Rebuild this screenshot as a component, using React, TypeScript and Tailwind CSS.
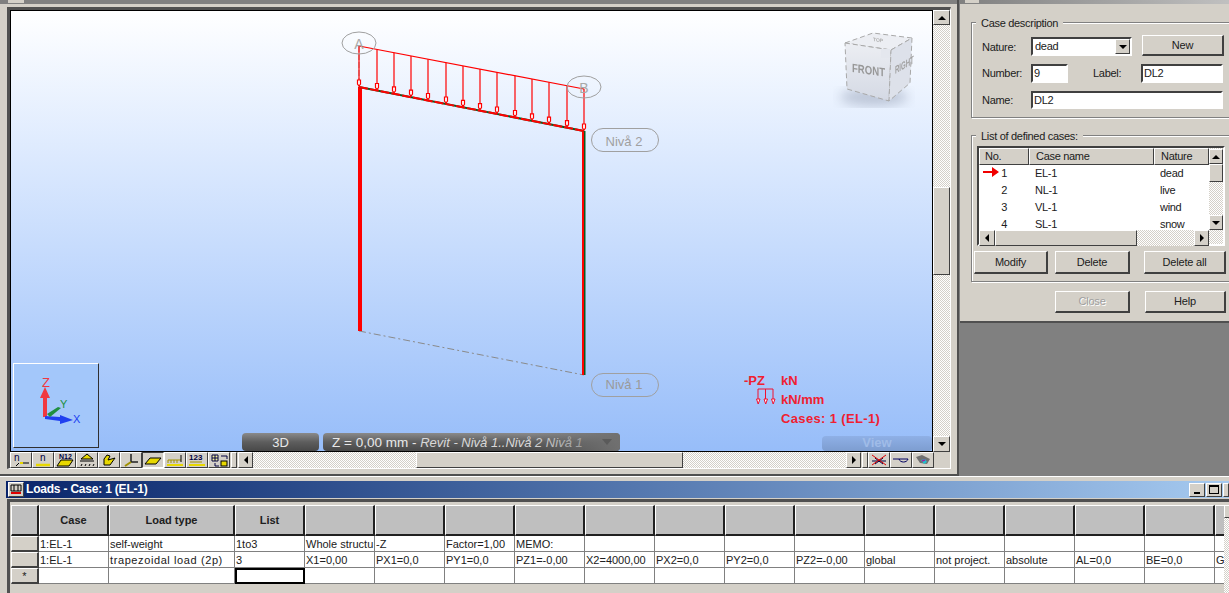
import type { ReactNode } from "react";

const raised = "border border-t-white border-l-white border-r-[#404040] border-b-[#404040] bg-[#d4d0c8]";
const sunken = "border-2 border-t-[#404040] border-l-[#404040] border-r-white border-b-white bg-white";
const dither = "bg-[repeating-conic-gradient(#d4d0c8_0_25%,#ffffff_0_50%)] bg-[length:2px_2px]";
const dialogText = "text-[11px] tracking-[-0.3px] text-[#202020]";

const loadXs = [359, 377, 394, 411, 428, 446, 463, 480, 497, 515, 532, 549, 567, 584];

const columns = [28, 70, 126, 70, 70, 70, 70, 70, 70, 70, 70, 70, 70, 70, 70, 70, 70, 20];
const headers = ["", "Case", "Load type", "List"];

const rows = [
    ["", "1:EL-1", "self-weight", "1to3", "Whole structu", "-Z", "Factor=1,00", "MEMO:"],
    ["", "1:EL-1", "trapezoidal load (2p)", "3", "X1=0,00", "PX1=0,0", "PY1=0,0", "PZ1=-0,00", "X2=4000,00", "PX2=0,0", "PY2=0,0", "PZ2=-0,00", "global", "not project.", "absolute", "AL=0,0", "BE=0,0", "G"],
    ["*"],
];

const cases = [
    ["1", "EL-1", "dead"],
    ["2", "NL-1", "live"],
    ["3", "VL-1", "wind"],
    ["4", "SL-1", "snow"],
];

function Arrow({ dir, size = 4 }: { dir: "up" | "down" | "left" | "right"; size?: number }) {
    const points = {
        up: "0,6 8,6 4,2",
        down: "0,2 8,2 4,6",
        left: "6,0 6,8 2,4",
        right: "2,0 2,8 6,4",
    }[dir];
    return (
        <svg width={size * 2} height={size * 2} viewBox="0 0 8 8">
            <polygon points={points} fill="#000" />
        </svg>
    );
}

function ScrollButton({ dir, className }: { dir: "up" | "down" | "left" | "right"; className: string }) {
    return (
        <div className={`${raised} ${className} flex shrink-0 items-center justify-center`}>
            <Arrow dir={dir} />
        </div>
    );
}

function ToolButton({ pressed, width = "w-[22px]", children }: { pressed?: boolean; width?: string; children?: ReactNode }) {
    return (
        <div className={`${width} h-[16px] shrink-0 flex items-center justify-center border ${pressed ? "border-t-[#404040] border-l-[#404040] border-r-white border-b-white" : "border-t-white border-l-white border-r-[#404040] border-b-[#404040]"} bg-[#d4d0c8]`}>
            {children}
        </div>
    );
}

function ToolIcon({ children }: { children: ReactNode }) {
    return (
        <svg width="20" height="14" viewBox="0 0 20 14" className="font-['Liberation_Sans',sans-serif]">
            {children}
        </svg>
    );
}

function Toolbar() {
    return (
        <div className="h-[16px] flex bg-[#d4d0c8] w-[924px] shrink-0">
            <ToolButton><ToolIcon><text x="3" y="8" fontSize="10" fill="#000040">n</text><path d="M10 10h8" stroke="#000" /><path d="M9 10h3" stroke="#e8d800" strokeWidth="2" /><path d="M5 13l3-3" stroke="#000" /></ToolIcon></ToolButton>
            <ToolButton><ToolIcon><text x="7" y="8" fontSize="10" fill="#000040">n</text><path d="M3 12h14" stroke="#e8d800" strokeWidth="2.5" /></ToolIcon></ToolButton>
            <ToolButton><ToolIcon><text x="4" y="6" fontSize="7" fontWeight="700" fill="#000040">N12</text><polygon points="2,13 6,7 18,7 14,13" fill="#e8d800" stroke="#000" /></ToolIcon></ToolButton>
            <ToolButton><ToolIcon><polygon points="10,1 16,6 4,6" fill="#e8d800" stroke="#000" /><path d="M3 8h14" stroke="#000" /><path d="M5 11l-1 2M9 11l-1 2M13 11l-1 2M17 11l-1 2" stroke="#000" /></ToolIcon></ToolButton>
            <ToolButton><ToolIcon><polygon points="5,6 8,2 11,3 9,7 16,5 11,12 5,12" fill="#e8d800" stroke="#000" /></ToolIcon></ToolButton>
            <ToolButton><ToolIcon><path d="M10 1v8h7" stroke="#202020" strokeWidth="1.5" fill="none" /><path d="M4 13l6-4" stroke="#a09000" strokeWidth="2" /></ToolIcon></ToolButton>
            <ToolButton pressed><ToolIcon><polygon points="2,11 7,5 18,5 13,11" fill="#e8d800" stroke="#000" /></ToolIcon></ToolButton>
            <ToolButton><ToolIcon><path d="M3 7h13M3 7v3M6 7v3M9 7v3M12 7v3" stroke="#a09000" fill="none" /><path d="M16 2v7" stroke="#000" /><path d="M2 12h16" stroke="#e8d800" strokeWidth="2" /></ToolIcon></ToolButton>
            <ToolButton><ToolIcon><text x="2" y="7" fontSize="8" fontWeight="700" fill="#000040">123</text><path d="M3 9h12" stroke="#a09000" /><path d="M2 12h16" stroke="#e8d800" strokeWidth="2" /></ToolIcon></ToolButton>
            <ToolButton><ToolIcon><path d="M3 2h6v6H3zM3 5h6M6 2v6" stroke="#000040" fill="#f4f0a0" /><path d="M12 3h6v3M6 10v3h4" stroke="#000040" fill="none" /><rect x="12" y="8" width="6" height="5" fill="#e8d800" stroke="#000" /></ToolIcon></ToolButton>
            <div className="w-[1px]" />
            <ToolButton width="w-[6px]" />
            <div className="w-[1px]" />
            <ScrollButton dir="left" className="w-[15px] h-[16px]" />
            <div className={`${dither} w-[163px] h-[16px]`} />
            <div className={`${raised} w-[267px] h-[16px] shrink-0`} />
            <div className={`${dither} w-[163px] h-[16px]`} />
            <ScrollButton dir="right" className="w-[15px] h-[16px]" />
            <div className="w-[1px]" />
            <ToolButton width="w-[6px]" />
            <ToolButton><ToolIcon><path d="M3 8h14M6 5l8 6M6 11l8-6" stroke="#000040" /><path d="M3 2l14 10M17 2L3 12" stroke="#e00000" /></ToolIcon></ToolButton>
            <ToolButton><ToolIcon><path d="M2 6h6M8 6c1 4 8 4 9 0H8" stroke="#000060" fill="none" /></ToolIcon></ToolButton>
            <ToolButton><ToolIcon><path d="M3 4l6-2 8 4-3 5-7-1z" fill="#707070" /><path d="M8 7l4-1 2 3-3 2z" fill="#20c0d0" /><path d="M9 8l3-1" stroke="#a020a0" strokeWidth="1.5" /></ToolIcon></ToolButton>
        </div>
    );
}

function Model() {
    return (
        <svg className="absolute inset-0 font-['Liberation_Sans',sans-serif]" width="923" height="441" viewBox="11 11 923 441">
            <defs>
                <filter id="blur"><feGaussianBlur stdDeviation="6" /></filter>
                <filter id="soft"><feGaussianBlur stdDeviation="0.4" /></filter>
                <linearGradient id="face" x1="0" y1="0" x2="0" y2="1">
                    <stop offset="0" stopColor="#eceef3" />
                    <stop offset="1" stopColor="#d4d9e4" />
                </linearGradient>
            </defs>

            {/* frame */}
            <path d="M359 46V87" stroke="#999" strokeDasharray="6 2" />
            <line x1="359" y1="331" x2="584" y2="375" stroke="#8a8a8a" strokeDasharray="7 3 2 3" />
            <rect x="358" y="87" width="4" height="244" fill="#ff0000" />
            <rect x="582" y="131" width="2" height="244" fill="#ff0000" />
            <rect x="584" y="131" width="1.5" height="244" fill="#0a5a20" />
            <line x1="359" y1="87" x2="584" y2="131" stroke="#0a5a20" strokeWidth="2" />
            <line x1="359" y1="87" x2="584" y2="131" stroke="#ff0000" strokeWidth="2" strokeDasharray="9 2" />

            {/* trapezoidal load */}
            <line x1="359" y1="46" x2="584" y2="89" stroke="#ff0000" strokeWidth="1.2" />
            {loadXs.map((x) => {
                const top = 46 + ((x - 359) * 43) / 225;
                const tip = 87 + ((x - 359) * 44) / 225;
                return (
                    <g key={x} stroke="#ff0000" strokeWidth="1.2" fill="#fff">
                        <line x1={x} y1={top} x2={x} y2={tip - 6} />
                        <polygon points={`${x - 1.5},${tip - 7} ${x + 1.5},${tip - 7} ${x + 1.5},${tip - 3} ${x},${tip - 1} ${x - 1.5},${tip - 3}`} />
                    </g>
                );
            })}

            {/* grid bubbles */}
            <ellipse cx="359" cy="43" rx="17" ry="11" fill="none" stroke="#a0a0a0" />
            <text x="359" y="49" textAnchor="middle" fontSize="14" fill="#a8a8a8">A</text>
            <ellipse cx="584" cy="87" rx="17" ry="11" fill="none" stroke="#a0a0a0" />
            <text x="584" y="93" textAnchor="middle" fontSize="14" fill="#a8a8a8">B</text>
            <rect x="591.5" y="128.5" width="67" height="23" rx="11.5" fill="none" stroke="#a0a0a0" />
            <text x="624" y="146" textAnchor="middle" fontSize="13" fill="#a0a0a0">Nivå 2</text>
            <rect x="591.5" y="373.5" width="67" height="23" rx="11.5" fill="none" stroke="#a0a0a0" />
            <text x="624" y="389" textAnchor="middle" fontSize="13" fill="#9a9a9a">Nivå 1</text>

            {/* view cube */}
            <ellipse cx="874" cy="97" rx="34" ry="9" fill="#8f9ab0" opacity="0.5" filter="url(#blur)" />
            <g filter="url(#soft)">
                <polygon points="845,43 873,33 912,38 891,50" fill="#eceef3" stroke="#a8a8a8" strokeDasharray="5 3" />
                <polygon points="845,43 891,50 889,101 847,89" fill="url(#face)" stroke="#a8a8a8" strokeDasharray="5 3" />
                <polygon points="891,50 912,38 910,83 889,101" fill="#dde1ea" stroke="#a8a8a8" strokeDasharray="5 3" />
                <rect x="881" y="49" width="9" height="9" fill="#e4e7ee" />
                <text x="0" y="0" fontSize="12" fontWeight="700" fill="#979797" transform="translate(852 72) skewY(8) scale(0.8 1)">FRONT</text>
                <text x="0" y="0" fontSize="11" fontWeight="700" fill="#a0a0a0" transform="translate(895 74) skewY(-30) scale(0.55 1)">RIGHT</text>
                <text x="0" y="0" fontSize="5" fontWeight="700" fill="#b0b0b0" transform="translate(873 41) skewY(8)">TOP</text>
            </g>

            {/* load legend */}
            <path d="M758 400v-11h15v11M765.5 389v11" stroke="#f01030" fill="none" />
            <polygon points="756.5,399 760,399 758.2,404" fill="#fff" stroke="#f01030" />
            <polygon points="764,399 767.5,399 765.7,404" fill="#fff" stroke="#f01030" />
            <polygon points="771.5,399 775,399 773.2,404" fill="#fff" stroke="#f01030" />
        </svg>
    );
}

function AxisBox() {
    return (
        <div className="absolute left-[2px] top-[352px] w-[86px] h-[85px] border border-t-white border-l-white border-r-[#303030] border-b-[#303030] bg-[#a3c7fa]">
            <svg width="84" height="83" viewBox="0 0 84 83" className="font-['Liberation_Sans',sans-serif]">
                <polygon points="29,53 29,34 26,34 31,23 36,34 33,34 33,53" fill="#f03840" />
                <polygon points="31,52 46,53 46,51 59,56 46,60 46,57 31,55" fill="#2040f0" />
                <polygon points="33,50 44,43 47,44 36,53" fill="#209040" />
                <text x="32" y="23" textAnchor="middle" fontSize="13" fill="#f03840">Z</text>
                <text x="46" y="44" fontSize="11" fill="#209040">Y</text>
                <text x="59" y="59" fontSize="11" fill="#2040f0">X</text>
            </svg>
        </div>
    );
}

function ViewerWindow() {
    return (
        <div className="w-[959px] h-full flex flex-col bg-[#d4d0c8] border-r-2 border-b-2 border-r-[#505050] border-b-[#505050]">
            <div className="h-[4px] shrink-0 bg-[#808080] pl-[8px]">
                <div className="w-[16px] h-[3px] bg-[#d4d0c8]" />
            </div>
            <div className="flex-1 pl-[7px] pr-[6px] pt-[3px]">
                <div className="border-t-[3px] border-l-[3px] border-[#505050] border-r border-b border-r-white border-b-white">
                    <div className="flex h-[442px]">
                        <div className="relative w-[924px] border-t border-l border-r border-b border-black bg-linear-to-b from-white to-[#97bdf9] overflow-hidden">
                            <Model />
                            <AxisBox />
                            <div className="absolute left-[733px] top-[362px] text-[13px] leading-[15px] font-bold text-[#f02030]">-PZ</div>
                            <div className="absolute left-[770px] top-[362px] text-[13px] leading-[15px] font-bold text-[#f02030]">kN</div>
                            <div className="absolute left-[770px] top-[381px] text-[13px] leading-[15px] font-bold text-[#f02030]">kN/mm</div>
                            <div className="absolute left-[770px] top-[400px] text-[13px] leading-[15px] font-bold tracking-[0.35px] text-[#f02030] whitespace-nowrap">Cases: 1 (EL-1)</div>
                            <div className="absolute left-[231px] top-[422px] w-[77px] h-[18px] rounded-[4px] bg-linear-to-b from-[#8a8a8a] via-[#5e5e5e] to-[#484848] text-[#e8e8e8] text-[13px] leading-[19px] text-center">3D</div>
                            <div className="absolute left-[312px] top-[422px] w-[297px] h-[18px] rounded-[4px] bg-linear-to-b from-[#8a8a8a] via-[#5e5e5e] to-[#484848] text-[#e8e8e8] text-[13.5px] leading-[19px] pl-[9px] whitespace-nowrap">
                                Z = 0,00 mm - <span className="italic text-[13px] text-[#d8d8d8]">Revit - Nivå 1..Nivå 2 Nivå 1</span>
                                <div className="absolute right-0 top-0 h-full w-[90px] rounded-r-[4px] bg-linear-to-r from-transparent to-[#707070]" />
                                <div className="absolute right-[8px] top-[6px] w-0 h-0 border-x-[5px] border-x-transparent border-t-[6px] border-t-[#5a5a5a]" />
                            </div>
                            <div className="absolute left-[811px] top-[425px] w-[110px] h-[15px] rounded-[4px] bg-linear-to-b from-[#8fb0e6] to-[#7d9dd0] text-[#a0bce8] font-bold text-[13px] leading-[13px] text-center">View</div>
                        </div>
                        <div className={`${dither} w-[17px] flex flex-col`}>
                            <ScrollButton dir="up" className="w-[17px] h-[15px]" />
                            <div className="h-[162px]" />
                            <div className={`${raised} w-[17px] h-[88px]`} />
                            <div className="flex-1" />
                            <ScrollButton dir="down" className="w-[17px] h-[16px]" />
                        </div>
                    </div>
                    <Toolbar />
                </div>
            </div>
        </div>
    );
}

function DialogButton({ label, className, disabled }: { label: string; className: string; disabled?: boolean }) {
    return (
        <div className={`${raised} border-r-2 border-b-2 ${className} flex items-center justify-center text-[11px] tracking-[-0.2px] ${disabled ? "text-[#a0a0a0] [text-shadow:1px_1px_0_#fff]" : "text-[#202020]"}`}>
            {label}
        </div>
    );
}

function TextBox({ value, className }: { value: string; className: string }) {
    return <div className={`${sunken} ${className} ${dialogText} leading-[15px] pl-[1px]`}>{value}</div>;
}

function GroupBox({ title, className, children }: { title: string; className: string; children: ReactNode }) {
    return (
        <div className={`relative ml-[11px] w-[262px] border border-[#808080] shadow-[inset_1px_1px_0_#fff,1px_1px_0_#fff] ${className}`}>
            <span className={`absolute left-[4px] -top-[7px] bg-[#d4d0c8] px-[5px] ${dialogText} leading-[14px] whitespace-nowrap`}>{title}</span>
            {children}
        </div>
    );
}

function CaseDialog() {
    return (
        <div className="h-[323px] bg-[#d4d0c8] border-b-2 border-b-[#505050] overflow-hidden">
            <div className="h-[4px] bg-linear-to-r from-[#808080] to-[#c0c0c0] pl-[5px] flex">
                <div className="w-[14px] h-[3px] bg-[#d4d0c8]" />
            </div>
            <GroupBox title="Case description" className="mt-[18px] h-[96px] pl-[10px] pt-[12px]">
                <div className={`flex items-end h-[21px] ${dialogText}`}>
                    <span className="w-[49px] leading-[18px]">Nature:</span>
                    <div className={`${sunken} w-[101px] h-[19px] flex justify-between pl-[2px] leading-[15px] items-center`}>
                        dead
                        <ScrollButton dir="down" className="w-[15px] h-[15px]" />
                    </div>
                    <DialogButton label="New" className="ml-[10px] w-[82px] h-[21px]" />
                </div>
                <div className={`flex items-center mt-[8px] h-[19px] ${dialogText}`}>
                    <span className="w-[49px]">Number:</span>
                    <TextBox value="9" className="w-[37px] h-[19px]" />
                    <span className="ml-[25px] w-[48px]">Label:</span>
                    <TextBox value="DL2" className="w-[82px] h-[19px]" />
                </div>
                <div className={`flex items-center mt-[8px] h-[18px] ${dialogText}`}>
                    <span className="w-[49px]">Name:</span>
                    <TextBox value="DL2" className="w-[192px] h-[18px]" />
                </div>
            </GroupBox>
            <GroupBox title="List of defined cases:" className="mt-[17px] h-[147px] pt-[10px]">
                <div className="ml-[5px] w-[248px] h-[100px] flex border-2 border-t-[#404040] border-l-[#404040] border-r-white border-b-white bg-[#d4d0c8]">
                    <div className="w-[230px] flex flex-col">
                        <div className={`h-[17px] flex ${dialogText} leading-[15px] shrink-0`}>
                            <div className={`${raised} w-[50px] pl-[5px]`}>No.</div>
                            <div className={`${raised} w-[125px] pl-[6px]`}>Case name</div>
                            <div className={`${raised} w-[55px] pl-[6px]`}>Nature</div>
                        </div>
                        <div className="h-[65px] bg-white overflow-hidden relative shrink-0">
                            <svg className="absolute left-[4px] top-[1px]" width="17" height="12" viewBox="0 0 17 12">
                                <polygon points="0,5 9,5 9,1 16,6 9,11 9,7 0,7" fill="#f00000" />
                            </svg>
                            {cases.map(([no, name, nature]) => (
                                <div key={no} className={`flex h-[17px] ${dialogText} leading-[17px]`}>
                                    <span className="w-[50px] text-right pr-[22px]">{no}</span>
                                    <span className="w-[125px] pl-[6px]">{name}</span>
                                    <span className="pl-[6px]">{nature}</span>
                                </div>
                            ))}
                        </div>
                        <div className={`${dither} h-[16px] flex`}>
                            <ScrollButton dir="left" className="w-[16px] h-[16px]" />
                            <div className={`${raised} w-[142px] h-[16px]`} />
                            <div className="flex-1" />
                            <ScrollButton dir="right" className="w-[15px] h-[16px]" />
                        </div>
                    </div>
                    <div className={`${dither} w-[14px] flex-1 flex flex-col pt-[1px]`}>
                        <ScrollButton dir="up" className="w-full h-[15px]" />
                        <div className={`${raised} w-full h-[18px]`} />
                        <div className="h-[33px]" />
                        <ScrollButton dir="down" className="w-full h-[15px]" />
                    </div>
                </div>
                <div className="flex ml-[2px] mt-[5px]">
                    <DialogButton label="Modify" className="w-[74px] h-[23px]" />
                    <DialogButton label="Delete" className="ml-[7px] w-[75px] h-[23px]" />
                    <DialogButton label="Delete all" className="ml-[14px] w-[82px] h-[23px]" />
                </div>
            </GroupBox>
            <div className="flex ml-[95px] mt-[9px]">
                <DialogButton label="Close" disabled className="w-[75px] h-[22px]" />
                <DialogButton label="Help" className="ml-[15px] w-[81px] h-[22px]" />
            </div>
        </div>
    );
}

function LoadsTable() {
    return (
        <div className="w-[1213px] overflow-hidden text-[11px] text-[#202020]">
            <div className="flex h-[31px]">
                {columns.map((w, i) => (
                    <div
                        key={i}
                        style={{ width: w }}
                        className="shrink-0 bg-[#bfbfbf] border border-t-white border-l-white border-r-2 border-b-2 border-r-[#202020] border-b-[#202020] flex items-center justify-center font-bold"
                    >
                        {headers[i]}
                    </div>
                ))}
            </div>
            {rows.map((row, r) => (
                <div key={r} className="flex h-[16px] bg-white">
                    {columns.map((w, i) => (
                        <div
                            key={i}
                            style={{ width: w }}
                            className={
                                i === 0
                                    ? `shrink-0 ${raised} bg-[#c4c4c4] border-r-2 border-b-2 text-center leading-[14px]`
                                    : r === 2 && i === 3
                                    ? "shrink-0 border-2 border-black"
                                    : `shrink-0 border-r border-b border-[#808080] pl-[1px] leading-[17px] whitespace-nowrap overflow-hidden ${row[i] === "trapezoidal load (2p)" ? "tracking-[0.6px]" : ""}`
                            }
                        >
                            {row[i] ?? ""}
                        </div>
                    ))}
                </div>
            ))}
        </div>
    );
}

function LoadsWindow() {
    return (
        <div className="flex-1 flex flex-col bg-[#d4d0c8] border-t border-t-white pt-[4px]">
            <div className="ml-[6px] h-[17px] shrink-0 bg-linear-to-r from-[#0a246a] to-[#a6caf0] flex items-center">
                <div className={`${raised} ml-[2px] w-[16px] h-[15px] flex items-center justify-center`}>
                    <svg width="12" height="11" viewBox="0 0 12 11">
                        <path d="M1 1h10v6H1zM4 1v6M8 1v6" stroke="#000" fill="none" />
                        <path d="M1 9h10" stroke="#e00000" strokeWidth="2" />
                    </svg>
                </div>
                <span className="ml-[2px] text-white font-bold text-[12px] leading-[17px] whitespace-nowrap tracking-[-0.2px]">Loads - Case: 1 (EL-1)</span>
                <div className="ml-auto flex">
                    <div className={`${raised} w-[16px] h-[14px] flex items-end justify-center pb-[2px]`}><div className="w-[6px] h-[2px] bg-black" /></div>
                    <div className={`${raised} ml-[1px] w-[16px] h-[14px] flex items-center justify-center`}><div className="w-[10px] h-[9px] border border-t-2 border-black" /></div>
                    <div className={`${raised} ml-[1px] w-[6px] h-[14px]`} />
                </div>
            </div>
            <div className="pl-[7px] pt-[1px] flex-1">
                <div className="border-t-[3px] border-l-[3px] border-[#505050] flex h-full">
                    <div className="pt-[3px] pl-[1px] flex">
                        <LoadsTable />
                        <div className={`${dither} w-[20px] h-[90px]`}>
                            <ScrollButton dir="up" className="w-full h-[13px]" />
                        </div>
                    </div>
                </div>
            </div>
        </div>
    );
}

export default function App() {
    return (
        <main className="w-[1229px] h-[593px] overflow-hidden flex flex-col bg-[#808080] font-['Liberation_Sans',sans-serif]">
            <div className="flex h-[476px] shrink-0">
                <ViewerWindow />
                <div className="w-[270px] pl-[1px] overflow-hidden">
                    <CaseDialog />
                </div>
            </div>
            <LoadsWindow />
        </main>
    );
}
